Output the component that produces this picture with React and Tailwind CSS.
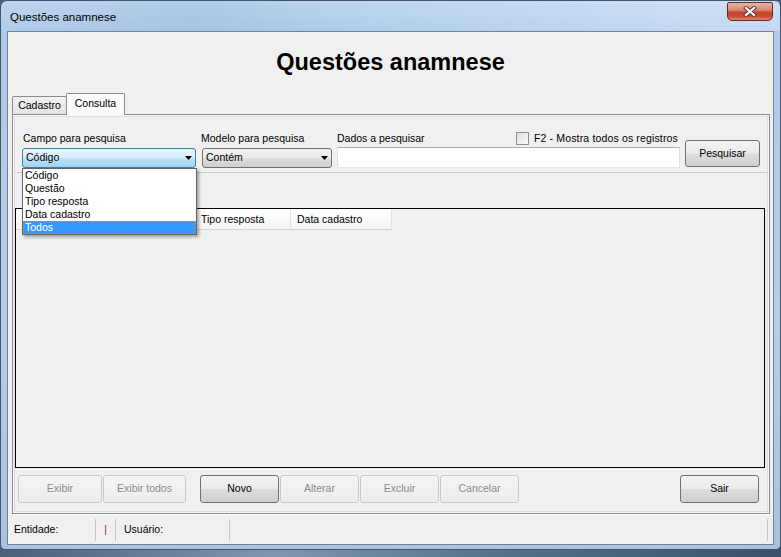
import React from 'react';

const campos = ['Código', 'Questão', 'Tipo resposta', 'Data cadastro', 'Todos'];

const btnOn =
  'h-[28px] flex items-center justify-center rounded-[3px] border border-[#707070] bg-[linear-gradient(#f2f2f2_0%,#ebebeb_48%,#dddddd_52%,#cfcfcf_100%)] text-black';
const btnOff =
  'h-[28px] flex items-center justify-center rounded-[3px] border border-[#c9c9c9] bg-[linear-gradient(#f5f5f5,#ececec)] text-[#8a8a8a]';

const Arrow = () => (
  <svg width="7" height="4" viewBox="0 0 7 4" className="shrink-0">
    <path d="M0 0 H7 L3.5 4 Z" fill="#000" />
  </svg>
);

const App = () => {
  return (
    <div className="w-[781px] h-[557px] overflow-hidden bg-[linear-gradient(90deg,#4b6178,#7f97ae_35%,#55708c_65%,#3a526b)] font-['Liberation_Sans',Arial,sans-serif] text-[10.5px] text-black">
      <div className="h-[550px] flex flex-col rounded-t-[7px] rounded-b-[5px] border border-[#42556d] bg-[linear-gradient(180deg,#bdd6f0_0%,#afcbea_6%,#b6cee9_60%,#a9c2df_100%)]">
        {/* title bar */}
        <div className="h-[30px] flex items-start bg-[linear-gradient(90deg,rgba(255,255,255,0)_0%,rgba(120,150,190,0.18)_25%,rgba(255,255,255,0)_45%,rgba(255,255,255,0.25)_90%)]">
          <div className="mt-[9px] ml-[9px] text-[11.5px] leading-[14px] text-black">Questões anamnese</div>
          <div className="ml-auto mr-[7px] mt-[1px] w-[46px] h-[19px] flex items-center justify-center rounded-t-[2px] rounded-b-[5px] border border-[#5e2a22] bg-[linear-gradient(#eab1a4_0%,#d98a78_40%,#c9432c_55%,#cc4a32_80%,#e08b72_100%)]">
            <svg width="14" height="11" viewBox="0 0 14 11">
              <path d="M3 2 L11 9 M11 2 L3 9" stroke="#5a3a36" strokeWidth="4.2" strokeLinecap="square" />
              <path d="M3 2 L11 9 M11 2 L3 9" stroke="#ffffff" strokeWidth="2.2" strokeLinecap="square" />
            </svg>
          </div>
        </div>

        {/* client area */}
        <div className="mx-[6px] h-[514px] border border-[#6f849d] bg-[#f0f0f0] flex flex-col">
          <div className="h-[61px] flex items-center justify-center text-[23.5px] font-bold leading-none">
            Questões anamnese
          </div>

          {/* tabs */}
          <div className="h-[21px] flex items-end pl-[4px] relative z-10">
            <div className="w-[55px] h-[18px] flex items-center justify-center border border-b-0 border-[#898c95] rounded-t-[2px] bg-[linear-gradient(#f2f2f2,#e3e3e3)]">
              Cadastro
            </div>
            <div className="w-[59px] h-[22px] -mb-[1px] -ml-[1px] flex items-center justify-center pb-[2px] border border-b-0 border-[#898c95] rounded-t-[2px] bg-[#fbfbfb]">
              Consulta
            </div>
          </div>

          {/* tab page */}
          <div className="ml-[4px] mr-[3px] h-[400px] border border-[#898c95] bg-[#f7f7f7] flex">
            <div className="m-[1px] flex-1 border border-[#dcdcdc] bg-[#f0f0f0] flex flex-col">
              {/* search panel */}
              <div className="h-[56px] border-b border-[#cfcfcf] flex items-start pt-[15px]">
                <div className="ml-[7px] w-[174px] flex flex-col relative z-20">
                  <div className="h-[13px] leading-[13px] pl-[1px]">Campo para pesquisa</div>
                  <div className="mt-[3px] h-[20px] flex items-center justify-between pl-[3px] pr-[3px] rounded-[3px] border border-[#3c7fb1] bg-[linear-gradient(#e6f4fc_0%,#d8eefa_48%,#bfe2f5_52%,#9fd3ef_100%)]">
                    <span>Código</span>
                    <Arrow />
                  </div>
                  <div className="absolute left-0 top-[36px] w-[175px] h-[67px] border border-[#646464] bg-white shadow-[2px_2px_3px_rgba(0,0,0,0.35)] flex flex-col">
                    {campos.map((c) =>
                      c === 'Todos' ? (
                        <div key={c} className="h-[13px] leading-[11px] pl-[1px] border border-dotted border-[#c9904f] bg-[#3399ff] text-white">
                          {c}
                        </div>
                      ) : (
                        <div key={c} className="h-[13px] leading-[13px] pl-[2px]">
                          {c}
                        </div>
                      )
                    )}
                  </div>
                </div>

                <div className="ml-[6px] w-[130px] flex flex-col">
                  <div className="h-[13px] leading-[13px] -ml-[1px]">Modelo para pesquisa</div>
                  <div className="mt-[3px] h-[20px] flex items-center justify-between pl-[3px] pr-[3px] rounded-[3px] border border-[#707070] bg-[linear-gradient(#f2f2f2_0%,#ebebeb_48%,#dddddd_52%,#cfcfcf_100%)]">
                    <span>Contém</span>
                    <Arrow />
                  </div>
                </div>

                <div className="ml-[5px] w-[343px] flex flex-col">
                  <div className="h-[13px] leading-[13px] flex items-center justify-between">
                    <span>Dados a pesquisar</span>
                    <span className="flex items-center pr-[2px]">
                      <span className="w-[13px] h-[13px] border border-[#8f8f8f] bg-[linear-gradient(135deg,#dcdcdc,#fdfdfd)] mr-[5px]" />
                      <span className="w-[144px] tracking-[0.15px]">F2 - Mostra todos os registros</span>
                    </span>
                  </div>
                  <div className="mt-[2px] h-[21px] border border-[#abadb3] border-l-[#e2e3ea] border-r-[#dbdfe6] border-b-[#e3e9ef] bg-white" />
                </div>

                <div className={`ml-[5px] mt-[8px] w-[75px] !h-[27px] ${btnOn}`}>Pesquisar</div>
              </div>

              {/* grid */}
              <div className="mt-[35px] w-[750px] h-[260px] border border-black bg-[#f0f0f0]">
                <div className="flex h-[21px] w-[376px] border-b border-[#d5d5d5] bg-[linear-gradient(#ffffff,#f4f5f7)]">
                  <div className="w-[60px] border-r border-[#e3e3e3]" />
                  <div className="w-[121px] border-r border-[#e3e3e3]" />
                  <div className="w-[94px] border-r border-[#e3e3e3] pl-[4px] leading-[20px]">Tipo resposta</div>
                  <div className="w-[101px] border-r border-[#e3e3e3] pl-[6px] leading-[20px]">Data cadastro</div>
                </div>
              </div>

              {/* buttons */}
              <div className="mt-[7px] flex">
                <div className={`ml-[3px] w-[84px] ${btnOff}`}>Exibir</div>
                <div className={`ml-[1px] w-[83px] ${btnOff}`}>Exibir todos</div>
                <div className={`ml-[14px] w-[79px] ${btnOn}`}>Novo</div>
                <div className={`ml-[1px] w-[79px] ${btnOff}`}>Alterar</div>
                <div className={`ml-[1px] w-[79px] ${btnOff}`}>Excluir</div>
                <div className={`ml-[1px] w-[79px] ${btnOff}`}>Cancelar</div>
                <div className={`ml-auto mr-[8px] w-[79px] ${btnOn}`}>Sair</div>
              </div>
            </div>
          </div>

          {/* status bar */}
          <div className="flex-1 flex items-center border-t border-white">
            <div className="w-[88px] h-[22px] flex items-center pl-[6px] border-r border-[#c6c6c6]">Entidade:</div>
            <div className="w-[20px] h-[22px] flex items-center justify-center border-r border-[#c6c6c6] text-[#a0206e]">|</div>
            <div className="w-[114px] h-[22px] flex items-center pl-[8px] border-r border-[#c6c6c6]">Usuário:</div>
            <div className="flex-1 h-[22px] mr-[5px] border-r border-[#c6c6c6]" />
          </div>
        </div>
      </div>
    </div>
  );
};

export default App;
